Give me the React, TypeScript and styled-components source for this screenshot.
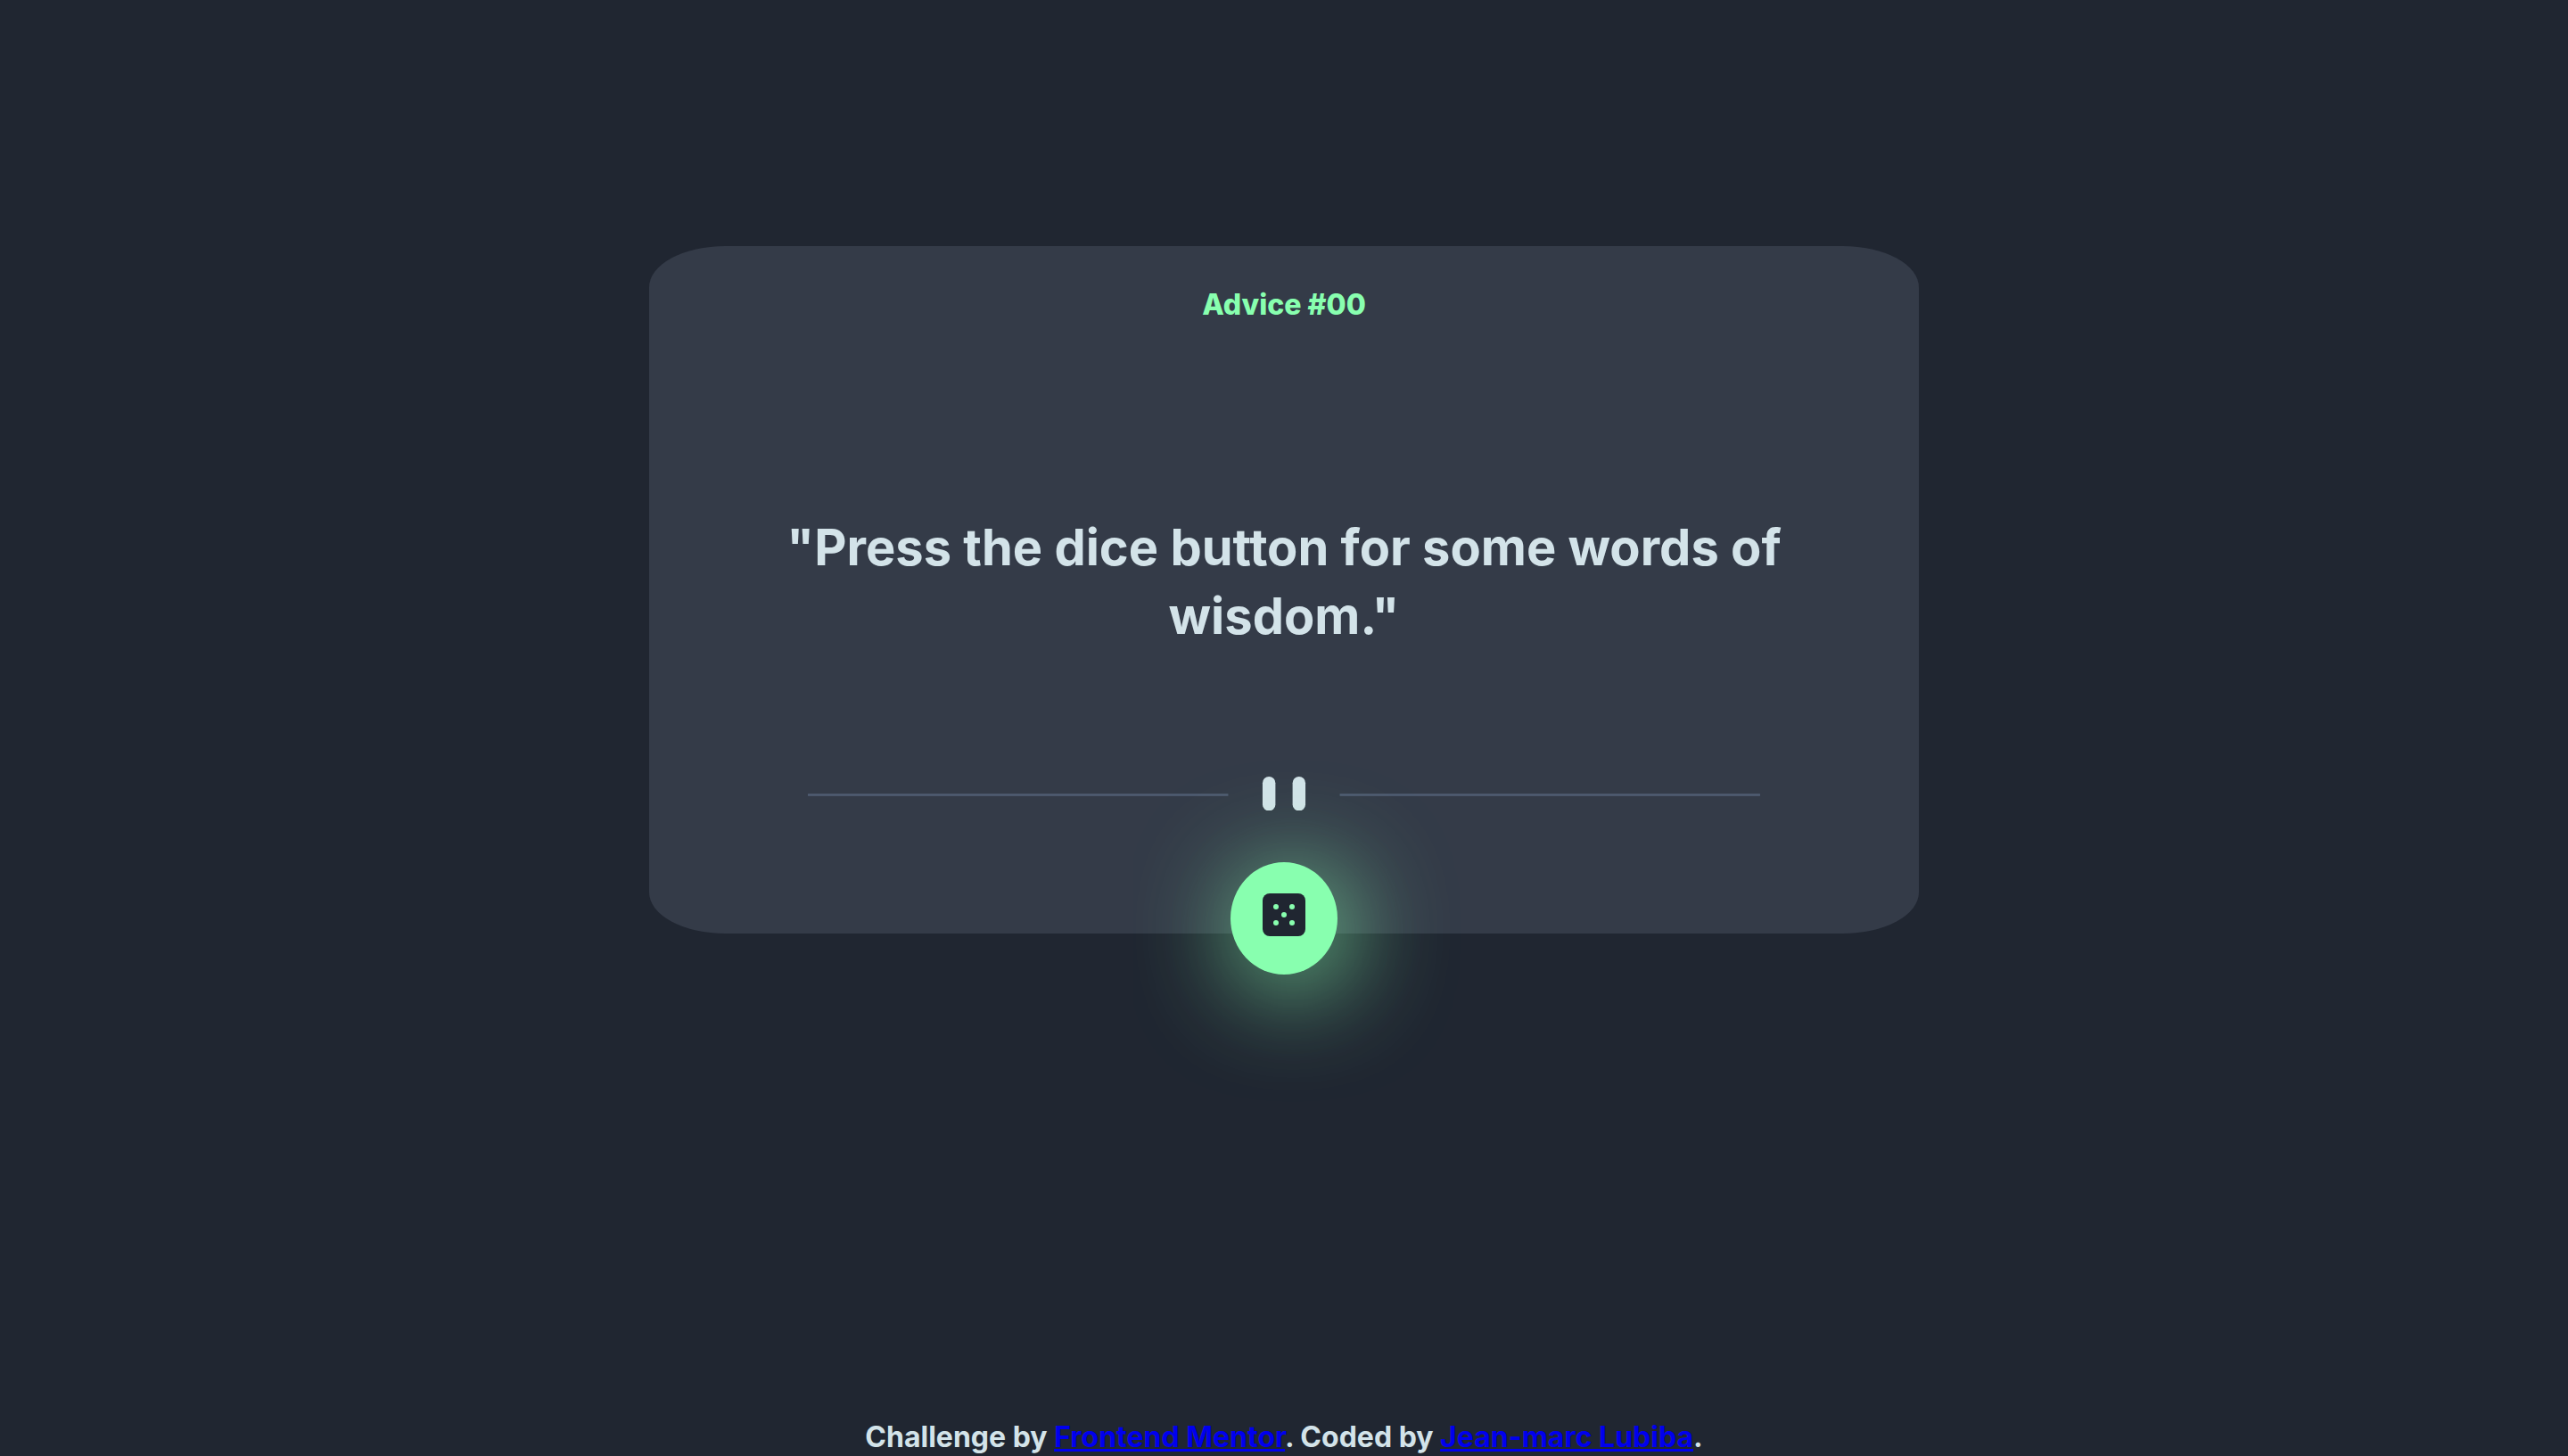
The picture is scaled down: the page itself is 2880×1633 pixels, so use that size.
import React, { useState } from "react";
import styled, { createGlobalStyle } from "styled-components";

const color = {
  page: "#202631",
  card: "#343b48",
  text: "#d3e3e9",
  neon: "#88ffaf",
  glow: "#88ffafe0",
  rule: "#505d73",
  link: "#0000ee",
};

const GlobalStyle = createGlobalStyle`
  body {
    margin: 0;
    background: ${color.page};
    color: ${color.text};
    font-family: Inter, "Liberation Sans", sans-serif;
    font-weight: 700;
  }
`;

const Page = styled.div`
  box-sizing: border-box;
  min-height: 100vh;
  display: flex;
  flex-direction: column;
  justify-content: space-between;
  align-items: center;
  padding-top: 276px;
`;

const Card = styled.main`
  box-sizing: border-box;
  width: 90%;
  max-width: 1424px;
  display: flex;
  flex-direction: column;
  align-items: center;
  padding-top: 44px;
  border-radius: 6%;
  background: ${color.card};
`;

const Title = styled.h1`
  margin: 0;
  color: ${color.neon};
  font-size: 32px;
  font-weight: 800;
  line-height: 44px;
`;

const Quote = styled.p`
  box-sizing: border-box;
  width: 100%;
  margin: 212px 0 141px;
  padding: 0 120px;
  font-size: 56px;
  line-height: 77px;
  text-align: center;
`;

const Divider = styled.svg`
  display: block;
  width: 75%;
  height: auto;
`;

const DiceButton = styled.button`
  display: flex;
  align-items: center;
  justify-content: center;
  box-sizing: border-box;
  width: 120px;
  height: 126px;
  margin: 58px 0 -46px;
  padding: 0 0 8px;
  border: 0;
  border-radius: 50%;
  background: ${color.neon};
  box-shadow: 10px 14px 116px ${color.glow};
  cursor: pointer;
`;

const Footer = styled.footer`
  font-size: 32px;
  line-height: 42px;
  text-align: center;
`;

const FooterLink = styled.a`
  color: ${color.link};
`;

const pips = [
  [7.5, 7.5],
  [16.5, 7.5],
  [12, 12],
  [7.5, 16.5],
  [16.5, 16.5],
];

const DiceIcon = () => (
  <svg width="48" height="48" viewBox="0 0 24 24" aria-hidden="true">
    <rect width="24" height="24" rx="4" fill={color.page} />
    {pips.map(([x, y]) => (
      <circle key={`${x}-${y}`} cx={x} cy={y} r="1.5" fill={color.neon} />
    ))}
  </svg>
);

const advice = [
  "Press the dice button for some words of wisdom.",
  "Measure twice, cut once.",
  "A problem shared is a problem halved.",
];

export default function App() {
  const [index, setIndex] = useState(0);

  return (
    <>
      <GlobalStyle />
      <Page>
        <Card>
          <Title>{`Advice #${String(index).padStart(2, "0")}`}</Title>
          <Quote>{`"${advice[index]}"`}</Quote>
          <Divider viewBox="0 0 444 16" aria-hidden="true">
            <path fill={color.rule} d="M0 8h196v1H0zM248 8h196v1H248z" />
            <g transform="translate(212)" fill={color.text}>
              <rect width="6" height="16" rx="3" />
              <rect x="14" width="6" height="16" rx="3" />
            </g>
          </Divider>
          <DiceButton
            type="button"
            aria-label="New advice"
            onClick={() => setIndex((index + 1) % advice.length)}
          >
            <DiceIcon />
          </DiceButton>
        </Card>
        <Footer>
          Challenge by{" "}
          <FooterLink href="https://www.frontendmentor.io">Frontend Mentor</FooterLink>. Coded by{" "}
          <FooterLink href="#">Jean-marc Lubiba</FooterLink>.
        </Footer>
      </Page>
    </>
  );
}
